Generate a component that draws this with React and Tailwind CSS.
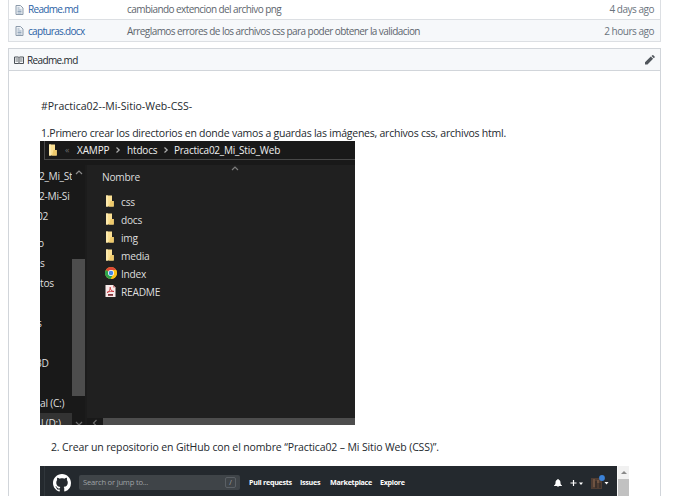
import React from "react";

function FileIcon() {
  return (
    <svg className="h-[10px] w-[9px] shrink-0" viewBox="0 0 9 10">
      <path d="M1 .5h4.500l2.500 2.500v6.500H1z" fill="#eef2f6" stroke="#8d9bab" />
      <path d="M2.500 3h2M2.500 5h4M2.500 6.500h4M2.500 8h4" stroke="#8a9fb5" strokeWidth=".9" />
    </svg>
  );
}

function FileRow({ name, message, age, className }) {
  return (
    <div className={`flex items-center border-x border-[#dcdfe3] pl-[6px] pr-[6px] text-[10px] ${className}`}>
      <FileIcon />
      <span className="ml-[4px] w-[99px] tracking-[-0.68px] text-[#2b62a5]">{name}</span>
      <span className="flex-1 whitespace-nowrap tracking-[-0.57px] text-[#5d656d]">{message}</span>
      <span className="whitespace-nowrap tracking-[-0.48px] text-[#6a737d]">{age}</span>
    </div>
  );
}

function FolderIcon() {
  return (
    <svg className="h-[12px] w-[9px] shrink-0" viewBox="0 0 9 12">
      <path d="M1 .5h6V6h1.700v5.500H1z" fill="#fbe093" />
      <path d="M5.500 6h3.200v5.500H4z" fill="#efca6c" />
      <path d="M1 .5h2v11H1z" fill="#fdeaae" />
    </svg>
  );
}

function ChromeIcon() {
  return (
    <svg className="h-[12px] w-[12px] shrink-0" viewBox="0 0 24 24">
      <circle cx="12" cy="12" r="12" fill="#fbc116" />
      <path d="M12 12 1.6 6A12 12 0 0 1 22.4 6z" fill="#df4937" />
      <path d="M12 12 1.6 6A12 12 0 0 0 11 24l5.5-9z" fill="#2ba24c" />
      <path d="M12 6h10.4A12 12 0 0 1 12 24l5.2-9z" fill="#fbc116" />
      <circle cx="12" cy="12" r="6" fill="#fff" />
      <circle cx="12" cy="12" r="4.6" fill="#4587e8" />
    </svg>
  );
}

function PdfIcon() {
  return (
    <svg className="h-[12px] w-[11px] shrink-0" viewBox="0 0 11 12">
      <path d="M.5 0h7.5l2.5 2.5V12H.5z" fill="#f7e9e9" />
      <path d="M8 0v2.5h2.5z" fill="#d98080" />
      <path d="M2 7.5c2-.5 3.5-3 3.2-5.3C5.200 4.500 6.500 6.500 9 6.500 6.500 6 4 6.500 2 7.500z" fill="none" stroke="#c8343a" strokeWidth=".9" />
      <path d="M3 9h5v1.800H3z" fill="#7b3034" />
    </svg>
  );
}

function Chevron({ d, className }) {
  return (
    <svg className={`shrink-0 ${className}`} viewBox="0 0 8 8" fill="none" stroke="currentColor" strokeWidth="1.2">
      <path d={d} />
    </svg>
  );
}

const UP = "M1 6 4 3l3 3";
const DOWN = "M1 2l3 3 3-3";
const RIGHT = "M2.500 1.500 5.200 4 2.500 6.500";
const LEFT = "M5.500 1 2.500 4l3 3";

function NavItem({ children, className = "" }) {
  return (
    <div className="flex h-[20px] shrink-0 items-center overflow-hidden whitespace-nowrap">
      <span className={className}>{children}</span>
    </div>
  );
}

function Entry({ icon, name }) {
  return (
    <div className="flex h-[18px] items-center">
      <span className="flex w-[16px] shrink-0 items-center">{icon}</span>
      <span className="pt-[2px]">{name}</span>
    </div>
  );
}

function Explorer() {
  return (
    <div className="flex h-[284px] w-[315px] flex-col overflow-hidden bg-[#191919] text-[10.2px] leading-[16px] tracking-[-0.25px] text-[#dedede]">
      <div className="ml-[4px] flex h-[19px] shrink-0 items-center border-b border-l border-[#484848] pl-[3px] text-[10px] text-[#f0f0f0]">
        <FolderIcon />
        <span className="ml-[8px] w-[12px] text-[9px] text-[#686868]">«</span>
        <span className="w-[37px] tracking-[-0.15px]">XAMPP</span>
        <Chevron d={RIGHT} className="mr-[5px] h-[8px] w-[8px] text-[#b0b0b0]" />
        <span className="w-[35px] tracking-[-0.15px]">htdocs</span>
        <Chevron d={RIGHT} className="mr-[4px] h-[8px] w-[8px] text-[#b0b0b0]" />
        <span className="whitespace-nowrap tracking-[-0.25px]">Practica02_Mi_Stio_Web</span>
      </div>
      <div className="flex min-h-0 flex-1">
        <div className="flex w-[32px] shrink-0 flex-col overflow-hidden pt-[6px] text-[10.2px]">
          <NavItem className="-ml-px tracking-[-0.35px]">2_Mi_St</NavItem>
          <NavItem className="-ml-px">2-Mi-Si</NavItem>
          <NavItem className="-ml-[3px]">02</NavItem>
          <div className="h-[7px] shrink-0" />
          <NavItem className="-ml-[2px]">o</NavItem>
          <NavItem>s</NavItem>
          <NavItem>tos</NavItem>
          <NavItem />
          <NavItem className="-ml-[3px]">s</NavItem>
          <NavItem />
          <NavItem className="-ml-[4px]">3D</NavItem>
          <NavItem />
          <NavItem>al (C:)</NavItem>
          <div className="-mr-px shrink-0 bg-[#333333]">
            <NavItem className="ml-px">l (D:)</NavItem>
          </div>
        </div>
        <div className="flex w-[13px] shrink-0 flex-col items-center">
          <Chevron d={UP} className="mt-[8px] h-[8px] w-[8px] text-[#8c8c8c]" />
          <div className="mt-[83px] h-[137px] w-full shrink-0 bg-[#4d4d4d]" />
          <Chevron d={DOWN} className="mt-[24px] h-[8px] w-[8px] text-[#6c6c6c]" />
        </div>
        <div className="mt-[5px] flex flex-1 flex-col border-l-2 border-[#1c1c1c] bg-[#202020]">
          <div className="flex items-start pl-[15px]">
            <span className="mt-[4px] w-[129px]">Nombre</span>
            <Chevron d={UP} className="-mt-px h-[8px] w-[8px] text-[#7c7c7c]" />
          </div>
          <div className="mt-[7px] flex flex-1 flex-col pl-[18px]">
            <Entry icon={<FolderIcon />} name="css" />
            <Entry icon={<FolderIcon />} name="docs" />
            <Entry icon={<FolderIcon />} name="img" />
            <Entry icon={<FolderIcon />} name="media" />
            <Entry icon={<ChromeIcon />} name="Index" />
            <Entry icon={<PdfIcon />} name="README" />
          </div>
          <div className="flex h-[7px] overflow-hidden bg-[#191919]">
            <Chevron d={LEFT} className="ml-[4px] mr-[4px] mt-[1px] h-[8px] w-[8px] text-[#6c6c6c]" />
            <div className="h-full flex-1 bg-[#4d4d4d]" />
          </div>
        </div>
      </div>
    </div>
  );
}

function GitHubBar() {
  return (
    <div className="flex h-[30px] w-[589px] overflow-hidden bg-[#24292e] text-white">
      <div className="w-[5px] border-r border-[#30363b]" />
      <div className="flex h-[33px] flex-1 items-center pl-[8px]">
        <svg className="h-[18px] w-[18px]" viewBox="0 0 16 16" fill="#fff">
          <path d="M8 0C3.580 0 0 3.580 0 8c0 3.540 2.290 6.530 5.470 7.590.4.070.55-.17.55-.38 0-.19-.01-.82-.01-1.490-2.010.37-2.530-.49-2.690-.94-.09-.23-.48-.94-.82-1.130-.28-.15-.68-.52-.01-.53.63-.01 1.080.58 1.230.82.72 1.210 1.870.87 2.330.66.07-.52.28-.87.51-1.070-1.780-.2-3.640-.89-3.640-3.950 0-.87.31-1.590.82-2.150-.08-.2-.36-1.020.08-2.120 0 0 .67-.21 2.200.82.64-.18 1.320-.27 2-.27s1.360.09 2 .27c1.530-1.040 2.200-.82 2.200-.82.44 1.100.16 1.920.08 2.120.51.56.82 1.270.82 2.150 0 3.070-1.870 3.750-3.650 3.950.29.25.54.73.54 1.480 0 1.070-.01 1.930-.01 2.200 0 .21.15.46.55.38A8.010 8.010 0 0 0 16 8c0-4.420-3.580-8-8-8z" />
        </svg>
        <div className="ml-[8px] flex h-[15px] w-[161px] items-center justify-between rounded-[2px] bg-[#3f4448] pl-[4px] pr-[4px] text-[7.6px] text-[#9fa3a6]">
          <span className="whitespace-nowrap tracking-[-0.2px]">Search or jump to...</span>
          <span className="flex h-[11px] w-[11px] items-center justify-center rounded-[2px] border border-[#5b6065] text-[7px] leading-none">/</span>
        </div>
        <div className="ml-[9px] flex text-[7.2px] font-bold tracking-[-0.3px]">
          <span className="w-[51px] whitespace-nowrap">Pull requests</span>
          <span className="w-[30px]">Issues</span>
          <span className="w-[50px]">Marketplace</span>
          <span>Explore</span>
        </div>
        <div className="ml-auto flex items-center pr-[8px]">
          <svg className="h-[8px] w-[8px]" viewBox="0 0 8 8" fill="#fff">
            <path d="M4 0c.5 0 .8.3.8.8C6.200 1.200 6.500 2.400 6.500 4c0 1.200.6 1.800 1.500 2.500v.5H0v-.5C.9 5.800 1.500 5.200 1.500 4c0-1.600.3-2.800 1.700-3.200C3.200.3 3.500 0 4 0zM2.800 7.300h2.400C5 8 3 8 2.800 7.300z" />
          </svg>
          <svg className="ml-[8px] h-[8px] w-[13px]" viewBox="0 0 13 8">
            <path d="M3.500 1v6M.5 4h6" stroke="#fff" strokeWidth="1.200" />
            <path d="M9 3.500h4L11 6z" fill="#fff" />
          </svg>
          <svg className="ml-[8px] mb-[2px] h-[16px] w-[18px]" viewBox="0 0 18 16">
            <path d="M0 4h11v11H0z" fill="#4f3d33" />
            <path d="M2 5h2v8H2zM6 6h2v3H6z" fill="#6e5341" />
            <path d="M4 7h2v7H4zM8 9h2v5H8z" fill="#3a302b" />
            <circle cx="11" cy="4" r="2.900" fill="#3b82d8" />
            <path d="M13.500 8h4l-2 2.500z" fill="#fff" />
          </svg>
        </div>
      </div>
      <div className="w-[12px] border-l border-[#fafafa] bg-[#c1c1c1]">
        <div className="flex h-[13px] items-center justify-center bg-[#f1f1f1]">
          <svg className="h-[3px] w-[6px]" viewBox="0 0 6 3">
            <path d="M0 3 3 0l3 3z" fill="#888" />
          </svg>
        </div>
      </div>
    </div>
  );
}

export default function App() {
  return (
    <div className="h-[496px] w-[676px] overflow-hidden bg-white pl-[8px] pr-[15px] font-['Open_Sans','Noto_Sans',sans-serif] text-[#24292e]">
      <FileRow name="Readme.md" message="cambiando extencion del archivo png" age="4 days ago" className="h-[19px] bg-white" />
      <FileRow
        name="capturas.docx"
        message="Arreglamos errores de los archivos css para poder obtener la validacion"
        age="2 hours ago"
        className="h-[23px] border-y bg-[#f6f8fa] pt-px"
      />
      <div className="mt-[6px] h-[460px] border border-[#d1d5da]">
        <div className="flex h-[22px] items-center justify-between border-b border-[#d1d5da] bg-[#f6f8fa] pl-[5px] pr-[5px]">
          <div className="flex items-center pt-px text-[10px] tracking-[-0.62px]">
            <svg className="mr-[3px] h-[9px] w-[10px]" viewBox="0 0 10 9" fill="none" stroke="#4b5157">
              <path d="M.5 1h4l.5.5.5-.5h4v6.500h-4L5 8l-.5-.5h-4zM5 1.500V8" />
              <path d="M1.500 3h2.500M1.500 5h2.500M6 3h2.500M6 5h2.500" strokeWidth=".8" />
            </svg>
            Readme.md
          </div>
          <svg className="mt-px h-[10px] w-[10px]" viewBox="0 0 10 10" fill="#50565c">
            <path d="M0 7.200 5.800 1.500l2.300 2.300L2.500 9.500H0zM6.500.9 7.300.2q.5-.4 1 0l1.300 1.300q.4.500 0 1l-.8.7z" />
          </svg>
        </div>
        <div className="pl-[31px] text-[10.5px]">
          <p className="mt-[26px] h-[18px] pl-px leading-[18px]">#Practica02--Mi-Sitio-Web-CSS-</p>
          <p className="mt-[9px] h-[17px] whitespace-nowrap pl-px leading-[18px] tracking-[-0.23px]">
            1.Primero crear los directorios en donde vamos a guardas las imágenes, archivos css, archivos html.
          </p>
          <Explorer />
          <p className="mt-[13px] h-[18px] whitespace-nowrap pl-[11px] leading-[18px] tracking-[-0.13px]">
            2. Crear un repositorio en GitHub con el nombre “Practica02 – Mi Sitio Web (CSS)”.
          </p>
          <div className="mt-[10px]">
            <GitHubBar />
          </div>
        </div>
      </div>
    </div>
  );
}
